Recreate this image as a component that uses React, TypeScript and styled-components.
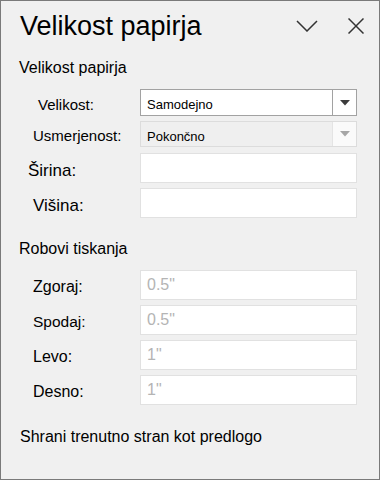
import React from "react";
import styled, { createGlobalStyle } from "styled-components";

const Global = createGlobalStyle`
  html, body { margin: 0; padding: 0; background: #f0f0f0; }
  * { box-sizing: border-box; }
`;

const Panel = styled.div`
  width: 380px;
  height: 480px;
  border: 1px solid #7a7a7a;
  background: #f0f0f0;
  padding: 10px 23px 0 17px;
  font-family: "Liberation Sans", Arial, sans-serif;
  color: #000;
  display: flex;
  flex-direction: column;
`;

const Header = styled.div`
  display: flex;
  align-items: center;
  height: 30px;
  margin-right: -11px;
`;

const Title = styled.h1`
  margin: 0 0 0 2px;
  font-size: 27px;
  font-weight: normal;
  line-height: 30px;
  flex: 1;
  white-space: nowrap;
`;

const IconButton = styled.button<{ $ml: number }>`
  border: none;
  background: transparent;
  padding: 0;
  width: 22px;
  height: 22px;
  display: flex;
  align-items: center;
  justify-content: center;
  margin-left: ${(p) => p.$ml}px;
  cursor: pointer;
`;

const SectionTitle = styled.div<{ $mt: number }>`
  margin-top: ${(p) => p.$mt}px;
  margin-left: 1px;
  font-size: 16px;
  line-height: 20px;
  white-space: nowrap;
`;

const Row = styled.div<{ $mt: number; $h: number }>`
  display: grid;
  grid-template-columns: 122px 217px;
  align-items: center;
  height: ${(p) => p.$h}px;
  margin-top: ${(p) => p.$mt}px;
`;

const Label = styled.label<{ $indent: number; $size: number; $drop: number }>`
  padding-left: ${(p) => p.$indent}px;
  padding-top: ${(p) => p.$drop}px;
  font-size: ${(p) => p.$size}px;
  line-height: 20px;
  white-space: nowrap;
`;

const Select = styled.div<{ $disabled?: boolean }>`
  height: 100%;
  display: grid;
  grid-template-columns: 1fr 24px;
  border: 1px solid ${(p) => (p.$disabled ? "#dcdcdc" : "#a2a2a2")};
  background: ${(p) => (p.$disabled ? "#efefef" : "#ffffff")};
`;

const SelectValue = styled.div`
  font-size: 13px;
  line-height: 16px;
  padding: 5px 0 0 6px;
  display: flex;
  align-items: center;
  color: #000;
`;

const SelectArrow = styled.div<{ $disabled?: boolean }>`
  border-left: 1px solid ${(p) => (p.$disabled ? "#e4e4e4" : "#a2a2a2")};
  background: ${(p) => (p.$disabled ? "#fafafa" : "#ffffff")};
  display: flex;
  align-items: center;
  justify-content: center;
`;

const Input = styled.div`
  height: 100%;
  border: 1px solid #e1e1e1;
  background: #ffffff;
  font-size: 16px;
  color: #b4b4b4;
  padding-left: 6px;
  display: flex;
  align-items: center;
`;

const Footer = styled.div`
  margin-top: 22px;
  margin-left: 2px;
  font-size: 16px;
  line-height: 20px;
  white-space: nowrap;
`;

const Triangle = ({ color }: { color: string }) => (
  <svg width="10" height="6" viewBox="0 0 10 6">
    <polygon points="0,0 10,0 5,5.5" fill={color} />
  </svg>
);

type Field = { label: string; indent: number; size: number; value?: string; mt: number };

const sizeFields: Field[] = [
  { label: "Širina:", indent: 10, size: 17, mt: 6 },
  { label: "Višina:", indent: 15, size: 17, mt: 5 },
];

const marginFields: Field[] = [
  { label: "Zgoraj:", indent: 15, size: 16, value: "0.5\"", mt: 11 },
  { label: "Spodaj:", indent: 15, size: 15.5, value: "0.5\"", mt: 5 },
  { label: "Levo:", indent: 15, size: 16, value: "1\"", mt: 5 },
  { label: "Desno:", indent: 15, size: 16, value: "1\"", mt: 5 },
];

export default function App() {
  return (
    <>
      <Global />
      <Panel>
        <Header>
          <Title>Velikost papirja</Title>
          <IconButton $ml={0} aria-label="Skrči">
            <svg width="22" height="12" viewBox="0 0 22 12">
              <polyline points="1,1 11,11 21,1" fill="none" stroke="#333" strokeWidth="1.5" />
            </svg>
          </IconButton>
          <IconButton $ml={27} aria-label="Zapri">
            <svg width="16" height="16" viewBox="0 0 16 16">
              <line x1="0.5" y1="0.5" x2="15.5" y2="15.5" stroke="#333" strokeWidth="1.5" />
              <line x1="15.5" y1="0.5" x2="0.5" y2="15.5" stroke="#333" strokeWidth="1.5" />
            </svg>
          </IconButton>
        </Header>

        <SectionTitle $mt={17}>Velikost papirja</SectionTitle>

        <Row $mt={11} $h={27}>
          <Label $indent={20} $size={15} $drop={4}>Velikost:</Label>
          <Select>
            <SelectValue>Samodejno</SelectValue>
            <SelectArrow>
              <Triangle color="#3c3c3c" />
            </SelectArrow>
          </Select>
        </Row>

        <Row $mt={5} $h={26}>
          <Label $indent={15} $size={15} $drop={4}>Usmerjenost:</Label>
          <Select $disabled>
            <SelectValue>Pokončno</SelectValue>
            <SelectArrow $disabled>
              <Triangle color="#a6a6a6" />
            </SelectArrow>
          </Select>
        </Row>

        {sizeFields.map((f) => (
          <Row key={f.label} $mt={f.mt} $h={30}>
            <Label $indent={f.indent} $size={f.size} $drop={5}>{f.label}</Label>
            <Input />
          </Row>
        ))}

        <SectionTitle $mt={21}>Robovi tiskanja</SectionTitle>

        {marginFields.map((f) => (
          <Row key={f.label} $mt={f.mt} $h={30}>
            <Label $indent={f.indent} $size={f.size} $drop={3}>{f.label}</Label>
            <Input>{f.value}</Input>
          </Row>
        ))}

        <Footer>Shrani trenutno stran kot predlogo</Footer>
      </Panel>
    </>
  );
}
